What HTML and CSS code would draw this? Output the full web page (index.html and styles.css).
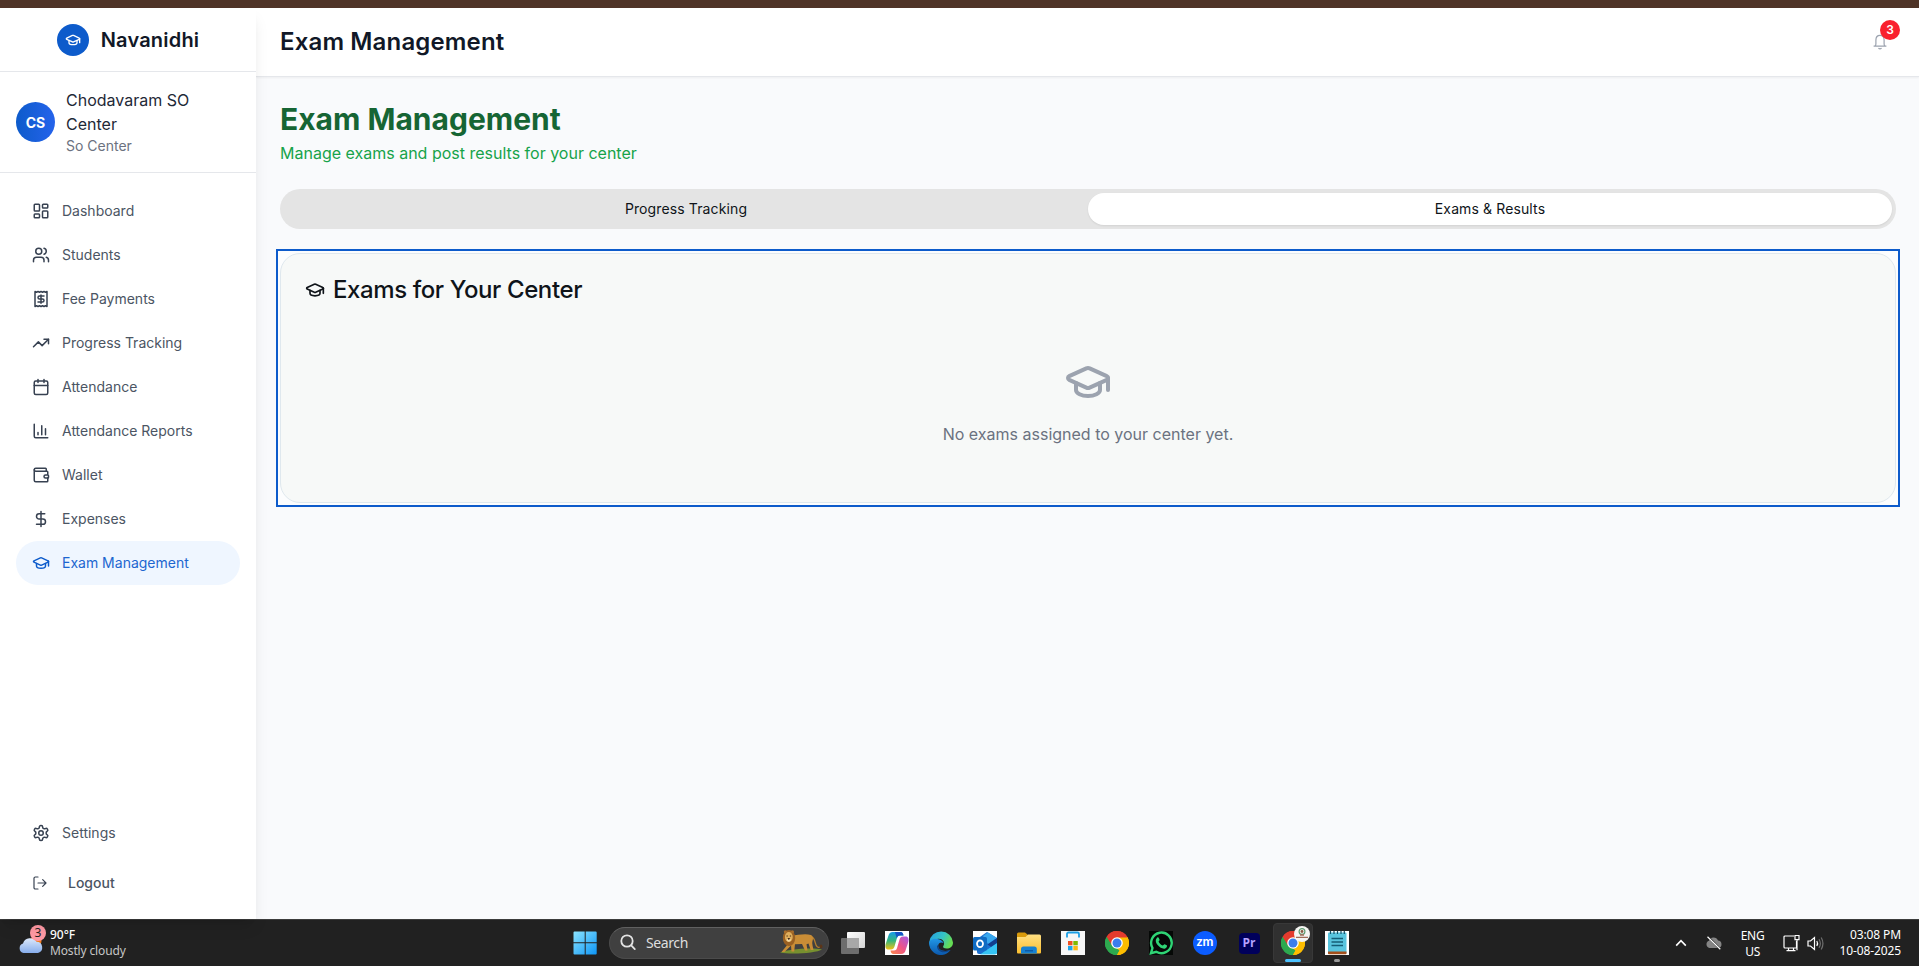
FILE: index.html
```html
<!DOCTYPE html>
<html lang="en">
<head>
<meta charset="utf-8">
<title>Exam Management - Navanidhi</title>
<link rel="stylesheet" href="styles.css">
</head>
<body>
<svg class="defs" aria-hidden="true">
  <symbol id="cap" viewBox="0 0 24 24"><path d="M21.42 10.922a1 1 0 0 0-.019-1.838L12.83 5.18a2 2 0 0 0-1.66 0L2.6 9.08a1 1 0 0 0 0 1.832l8.57 3.908a2 2 0 0 0 1.66 0z"/><path d="M22 10v6"/><path d="M6 12.5V16a6 3 0 0 0 12 0v-3.5"/></symbol>
  <symbol id="chrome" viewBox="0 0 24 24">
    <path fill="#e33b2e" d="M12 12 1.6 6A12 12 0 0 1 22.4 6z"/>
    <path fill="#2da94f" d="M12 12v12A12 12 0 0 1 1.6 6z"/>
    <path fill="#fdbd00" d="M12 12 22.4 6A12 12 0 0 1 12 24z"/>
    <path fill="#e33b2e" d="M12 6.4h10.6A12 12 0 0 0 1.6 6l5.5 9z"/>
    <path fill="#2da94f" d="M1.6 6 7.1 15l4.9 2.6 2.5 2L12 24A12 12 0 0 1 1.6 6z"/>
    <path fill="#fdbd00" d="M12 6.4h10.6A12 12 0 0 1 12 24l5-9z"/>
    <circle cx="12" cy="12" r="5.8" fill="#fff"/><circle cx="12" cy="12" r="4.5" fill="#3b7ded"/>
  </symbol>
</svg>
<div class="topstrip"></div>
<div class="app">
  <aside class="sidebar">
    <div class="brand"><span class="brand-mark"><svg class="ico i16"><use href="#cap"/></svg></span><span class="brand-name">Navanidhi</span></div>
    <div class="user">
      <span class="avatar">CS</span>
      <div class="user-text"><div class="user-name">Chodavaram SO Center</div><div class="user-role">So Center</div></div>
    </div>
    <nav class="nav">
      <a class="item"><svg class="ico i18" viewBox="0 0 24 24"><rect x="3" y="3" width="7" height="9" rx="1"/><rect x="14" y="3" width="7" height="5" rx="1"/><rect x="14" y="12" width="7" height="9" rx="1"/><rect x="3" y="16" width="7" height="5" rx="1"/></svg><span>Dashboard</span></a>
      <a class="item"><svg class="ico i18" viewBox="0 0 24 24"><path d="M16 21v-2a4 4 0 0 0-4-4H6a4 4 0 0 0-4 4v2"/><circle cx="9" cy="7" r="4"/><path d="M22 21v-2a4 4 0 0 0-3-3.87"/><path d="M16 3.13a4 4 0 0 1 0 7.75"/></svg><span>Students</span></a>
      <a class="item"><svg class="ico i18" viewBox="0 0 24 24"><path d="M4 2v20l2-1 2 1 2-1 2 1 2-1 2 1 2-1 2 1V2l-2 1-2-1-2 1-2-1-2 1-2-1-2 1Z"/><path d="M16 8h-6a2 2 0 1 0 0 4h4a2 2 0 1 1 0 4H8"/><path d="M12 17.5v-11"/></svg><span>Fee Payments</span></a>
      <a class="item"><svg class="ico i18" viewBox="0 0 24 24"><path d="m22 7-8.5 8.5-5-5L2 17"/><path d="M16 7h6v6"/></svg><span>Progress Tracking</span></a>
      <a class="item"><svg class="ico i18" viewBox="0 0 24 24"><path d="M8 2v4M16 2v4M3 10h18"/><rect x="3" y="4" width="18" height="18" rx="2"/></svg><span>Attendance</span></a>
      <a class="item"><svg class="ico i18" viewBox="0 0 24 24"><path d="M3 3v16a2 2 0 0 0 2 2h16M18 17V9M13 17V5M8 17v-3"/></svg><span>Attendance Reports</span></a>
      <a class="item"><svg class="ico i18" viewBox="0 0 24 24"><path d="M19 7V4a1 1 0 0 0-1-1H5a2 2 0 0 0 0 4h15a1 1 0 0 1 1 1v4h-3a2 2 0 0 0 0 4h3a1 1 0 0 0 1-1v-2a1 1 0 0 0-1-1"/><path d="M3 5v14a2 2 0 0 0 2 2h15a1 1 0 0 0 1-1v-4"/></svg><span>Wallet</span></a>
      <a class="item"><svg class="ico i18" viewBox="0 0 24 24"><path d="M12 2v20M17 5H9.5a3.5 3.5 0 0 0 0 7h5a3.5 3.5 0 0 1 0 7H6"/></svg><span>Expenses</span></a>
      <a class="item active"><svg class="ico i18"><use href="#cap"/></svg><span>Exam Management</span></a>
    </nav>
    <div class="nav-bottom">
      <a class="item"><svg class="ico i18" viewBox="0 0 24 24"><path d="M12.22 2h-.44a2 2 0 0 0-2 2v.18a2 2 0 0 1-1 1.73l-.43.25a2 2 0 0 1-2 0l-.15-.08a2 2 0 0 0-2.73.73l-.22.38a2 2 0 0 0 .73 2.73l.15.1a2 2 0 0 1 1 1.72v.51a2 2 0 0 1-1 1.74l-.15.09a2 2 0 0 0-.73 2.73l.22.38a2 2 0 0 0 2.73.73l.15-.08a2 2 0 0 1 2 0l.43.25a2 2 0 0 1 1 1.73V20a2 2 0 0 0 2 2h.44a2 2 0 0 0 2-2v-.18a2 2 0 0 1 1-1.73l.43-.25a2 2 0 0 1 2 0l.15.08a2 2 0 0 0 2.73-.73l.22-.39a2 2 0 0 0-.73-2.73l-.15-.08a2 2 0 0 1-1-1.74v-.5a2 2 0 0 1 1-1.74l.15-.09a2 2 0 0 0 .73-2.73l-.22-.38a2 2 0 0 0-2.73-.73l-.15.08a2 2 0 0 1-2 0l-.43-.25a2 2 0 0 1-1-1.73V4a2 2 0 0 0-2-2z"/><circle cx="12" cy="12" r="3"/></svg><span>Settings</span></a>
      <a class="item logout"><svg class="ico i16" viewBox="0 0 24 24"><path d="M9 21H5a2 2 0 0 1-2-2V5a2 2 0 0 1 2-2h4M16 17l5-5-5-5M21 12H9"/></svg><span>Logout</span></a>
    </div>
  </aside>
  <div class="content">
    <header class="header">
      <div class="header-title">Exam Management</div>
      <div class="bell"><svg width="14" height="16" viewBox="0 0 14 16"><path d="M1.9 12.1c.7-.5 1-1.2 1-2.2V6c0-2.800 1.700-4.700 4.100-4.700S11.100 3.200 11.100 6v3.900c0 1 .3 1.700 1 2.200M.6 12.200h12.800M5.400 14.300q1.600 1 3.200 0"/></svg><span class="badge">3</span></div>
    </header>
    <main class="main">
      <h1>Exam Management</h1>
      <p class="sub">Manage exams and post results for your center</p>
      <div class="tabs"><div class="tab">Progress Tracking</div><div class="tab on">Exams &amp; Results</div></div>
      <section class="panel"><div class="card">
        <h2><svg class="ico i20"><use href="#cap"/></svg><span>Exams for Your Center</span></h2>
        <div class="empty"><svg class="ico i48"><use href="#cap"/></svg><p>No exams assigned to your center yet.</p></div>
      </div></section>
    </main>
  </div>
</div>
<footer class="taskbar">
  <div class="weather">
    <svg width="28" height="30" viewBox="0 0 28 30"><defs><linearGradient id="cl" x1="0" y1="0" x2="0" y2="1"><stop offset="0" stop-color="#dce9fb"/><stop offset="1" stop-color="#86adeb"/></linearGradient></defs><circle cx="18" cy="16" r="5.500" fill="#f27a1a"/><path d="M5.500 28a5 5 0 0 1-.5-9.600 7.500 7.500 0 0 1 13.500-1.600A5.700 5.700 0 0 1 20 28z" fill="url(#cl)"/><circle cx="20" cy="8" r="8" fill="#ff99a4"/></svg>
    <span class="wbadge">3</span>
    <div class="wtext"><div class="deg">90°F</div><div class="cond">Mostly cloudy</div></div>
  </div>
  <div class="dock">
    <div class="slot"><svg width="24" height="24" viewBox="0 0 24 24"><defs><linearGradient id="wn" x1="0" y1="0" x2="1" y2="1"><stop offset="0" stop-color="#8be4ff"/><stop offset="1" stop-color="#0d95f5"/></linearGradient></defs><path fill="url(#wn)" d="M1.500.5h10.200v10.700H.5V1.500a1 1 0 0 1 1-1zM12.700.5h10a1 1 0 0 1 1 1v9.700h-11zM.5 12.300h11.200v11.200H1.500a1 1 0 0 1-1-1zM12.700 12.300h11v10.200a1 1 0 0 1-1 1h-10z"/></svg></div>
    <div class="search">
      <svg width="17" height="17" viewBox="0 0 17 17" fill="none" stroke="#e3e3e3" stroke-width="1.800" stroke-linecap="round"><circle cx="7" cy="7" r="5.700"/><path d="m11.200 11.300 3.600 3.800"/></svg><span>Search</span>
      <svg class="lion" width="44" height="26" viewBox="0 0 44 26"><path d="M1 23.500C8 20 34 18 43 20.500 38 24 12 26 1 23.500z" fill="#77902f"/><path d="M33 8c4 2 2.500 8.500 5.500 10 2 1 3.500-.5 3.300-1.500" fill="none" stroke="#b9802c" stroke-width="1.300"/><ellipse cx="42" cy="17.500" rx="1.500" ry="2" fill="#5b3518"/><path d="M13 7c5-1 13-2.500 19-1 2 .8 2.500 3.500 1.500 6-.6 1.800 0 4 1 9h-2.800L29.500 14.500l-2 .7 1 6.300h-2.500L23 15l-7 .3-.8 7.200h-2.700l-.5-6-6.500 6.500H2.500L9 15z" fill="#c98d36"/><ellipse cx="10" cy="9" rx="6.200" ry="8" fill="#9a6022"/><circle cx="6.300" cy="2.800" r="1.500" fill="#a96d2a"/><circle cx="13.500" cy="2.800" r="1.500" fill="#a96d2a"/><ellipse cx="9.800" cy="8" rx="3.900" ry="5" fill="#dfae5c"/><ellipse cx="9.800" cy="11" rx="2.100" ry="1.800" fill="#f3d9a5"/><path d="M7.500 7h1.300M10.800 7h1.300M9 9.500h1.600l-.8 1z" stroke="#3c210e" stroke-width=".9"/></svg>
    </div>
    <div class="slot"><svg width="24" height="24" viewBox="0 0 24 24"><defs><linearGradient id="tv" x1="0" y1="0" x2="1" y2="1"><stop offset="0" stop-color="#fff"/><stop offset="1" stop-color="#d5d5d5"/></linearGradient></defs><rect x="6" y="1" width="18" height="16" rx="1" fill="url(#tv)"/><rect x="0" y="7" width="18" height="16" rx="1" fill="#6d6d6d"/><path d="M6 7h12v10H6z" fill="#a8a8a8"/></svg></div>
    <div class="slot"><svg width="24" height="24" viewBox="0 0 24 24"><defs><linearGradient id="c1" x1="0" y1="0" x2="0" y2="1"><stop offset="0" stop-color="#159be9"/><stop offset=".5" stop-color="#35b67b"/><stop offset="1" stop-color="#f2c215"/></linearGradient><linearGradient id="c2" x1="1" y1="0" x2="0" y2="1"><stop offset="0" stop-color="#a55ce8"/><stop offset=".5" stop-color="#ee5488"/><stop offset="1" stop-color="#fb8a4a"/></linearGradient></defs><path fill="#fff" d="M0 0h24v24H0z"/><path d="M8 1h7.500c2 0 2.500 1.500 3 3.500H15c-2 0-2.600 1-3.200 3l-2.300 8c-.7 2-1.500 3-3.500 3H3.500C.5 18.500 0 16 .7 13L3.300 5C4 2.500 5.300 1 8 1z" fill="url(#c1)"/><path d="M10 1h5.500c2 0 2.500 1.500 3 3.500H15c-2 0-2.600 1-3.200 3z" fill="#1454c6"/><path d="M16 23H8.500c-2 0-2.500-1.500-3-3.500H9c2 0 2.600-1 3.200-3l2.300-8c.7-2 1.500-3 3.500-3h2.500c3 0 3.500 2.500 2.800 5.500L20.700 19C20 21.500 18.700 23 16 23z" fill="url(#c2)"/></svg></div>
    <div class="slot"><svg width="24" height="24" viewBox="0 0 24 24"><defs><linearGradient id="e1" x1="0" y1="0" x2="1" y2=".4"><stop offset="0" stop-color="#239de4"/><stop offset=".6" stop-color="#35c3c5"/><stop offset="1" stop-color="#66dc55"/></linearGradient><linearGradient id="e2" x1="0" y1="0" x2="0" y2="1"><stop offset="0" stop-color="#2096e6"/><stop offset="1" stop-color="#0b58ac"/></linearGradient></defs><path d="M.3 11A11.900 11.900 0 0 1 24 11.500c0 4-3 6-6.300 6-3 0-4.200-1.200-3.400-2.500 2.500-4-1-7.500-4.800-7.300C5 8 1 11 .3 15z" fill="url(#e1)"/><path d="M.1 12C.5 9 4.500 7.300 8.500 8c3 .4 5.500 2 6.200 4.200C12 10.500 9.500 12 9.200 14.500 9 18.500 13.500 21.500 21.500 19 17 25.500 9 25 5 21.700 1.500 19 .1 15.500.1 12z" fill="url(#e2)"/><path d="M8 14.500c-.5 4.500 4.300 8.800 12 5.800l1.500-1.300c-8 2.500-12.500-.5-12.300-4.500z" fill="#0e4389"/></svg></div>
    <div class="slot"><svg width="24" height="24" viewBox="0 0 24 24"><path fill="#fff" d="M0 0h24v24H0z"/><path d="M4 8 14 1l10 6v14a2 2 0 0 1-2 2H6a2 2 0 0 1-2-2z" fill="#1a6fd1"/><path d="m10 5 5-3.500L24 7l-9 6z" fill="#38a8ef"/><path d="m24 7-9.500 6.500L24 20z" fill="#123f8e"/><path d="M24 12v9a2.500 2.500 0 0 1-2.500 2.500H7z" fill="#35c4f4"/><rect y="6" width="14" height="13.500" rx="1.500" fill="#0f6cc4"/><ellipse cx="7" cy="12.700" rx="3" ry="3.400" fill="none" stroke="#fff" stroke-width="1.800"/></svg></div>
    <div class="slot"><svg width="24" height="24" viewBox="0 0 24 24"><defs><linearGradient id="fo" x1="0" y1="0" x2="0" y2="1"><stop offset="0" stop-color="#ffe083"/><stop offset="1" stop-color="#fbbe2f"/></linearGradient></defs><path d="M0 3a1.500 1.500 0 0 1 1.500-1.500H8l2.500 2V8H0z" fill="#d99a0b"/><path d="M0 6h8.500L11 3.500h11.500A1.500 1.500 0 0 1 24 5v16.500a1 1 0 0 1-1 1H1a1 1 0 0 1-1-1z" fill="url(#fo)"/><path d="M4 22.500V18a2.500 2.500 0 0 1 2.500-2.500h10.800a2.500 2.500 0 0 1 2.500 2.500v4.500z" fill="#1681d2"/><path d="M8 19h8v1.500H8z" fill="#0d5aa5"/></svg></div>
    <div class="slot"><svg width="24" height="24" viewBox="0 0 24 24"><path fill="#f7f7f7" d="M0 0h24v24H0z"/><path d="M6 6.500V3a1.500 1.500 0 0 1 1.500-1.500h9A1.500 1.500 0 0 1 18 3v3.500" fill="none" stroke="#1d9fe5" stroke-width="1.800"/><path fill="#ef5123" d="M7 10h4.500v4.300H7z"/><path fill="#7fba00" d="M12.300 10h4.500v4.300h-4.500z"/><path fill="#1ba5ea" d="M7 15h4.500v4.300H7z"/><path fill="#fcb813" d="M12.300 15h4.500v4.300h-4.500z"/></svg></div>
    <div class="slot"><svg width="24" height="24"><use href="#chrome"/></svg></div>
    <div class="slot"><svg width="24" height="24" viewBox="0 0 24 24"><path d="M0 0h24v24H0z" fill="#050806"/><path d="M2 22.200 3.500 17A10.300 10.300 0 1 1 7.300 20.800z" fill="none" stroke="#2fd475" stroke-width="2.400"/><path d="M8.800 6.200c.5 0 .8.200 1 .7l.8 1.900c.2.600-.9 1.500-1 1.900.9 1.900 2.300 3.100 4.100 3.900.5-.2 1.300-1.600 1.900-1.400l2.100 1c.8.400.2 2.700-1.500 3.300-4.500 1.300-10.500-5.100-9.300-8.900.3-1 1.100-2.200 1.900-2.400z" fill="#2fd475"/></svg></div>
    <div class="slot"><span class="zm">zm</span></div>
    <div class="slot"><span class="pr">Pr</span></div>
    <div class="slot"><div class="running"><svg width="24" height="24"><use href="#chrome"/></svg><svg class="profile" width="16" height="16" viewBox="0 0 16 16"><circle cx="8" cy="8" r="8" fill="#f5f5f2"/><circle cx="8" cy="5.500" r="2.900" fill="none" stroke="#5e9c72" stroke-width="1.200"/><circle cx="8" cy="5.500" r="1.400" fill="#8a5b43"/><path d="M6 9h4M2 11.300h12" stroke="#a06c58" stroke-width="1.300"/></svg><span class="bar"></span></div></div>
    <div class="slot note"><svg width="24" height="24" viewBox="0 0 24 24"><path fill="#fff" d="M0 0h24v24H0z"/><rect x="3" y="1.500" width="18.500" height="21" rx="1" fill="#58c4de"/><path d="M3 20.500h18.500V22a1 1 0 0 1-1 1.200H4A1 1 0 0 1 3 22z" fill="#a34f1b"/><path d="M5.500 0v3M9 0v3M12.500 0v3M16 0v3M19.300 0v3" stroke="#154e66" stroke-width="1.200"/><path d="M6.500 7.500h11.500M6.500 11h11.500M6.500 14.500h11.500" stroke="#145d77" stroke-width="1.500"/></svg><span class="dot"></span></div>
  </div>
  <div class="tray">
    <svg class="chev" width="12" height="8" viewBox="0 0 12 8"><path d="m1.200 6.600 4.800-5 4.800 5" fill="none" stroke="#fff" stroke-width="1.600"/></svg>
    <svg class="cloud" width="18" height="14" viewBox="0 0 18 14"><path d="M4.500 12A3.800 3.800 0 0 1 4 4.700a4.800 4.800 0 0 1 9-.2A3.800 3.800 0 0 1 13.500 12z" fill="#858585"/><path d="m3 .8 12.300 12.500" stroke="#222" stroke-width="2"/><path d="m2.500.8 12.800 12.400" stroke="#fff" stroke-width="1.200"/></svg>
    <div class="lang"><div>ENG</div><div>US</div></div>
    <svg class="net" width="17" height="18" viewBox="0 0 17 18" fill="none" stroke="#fff" stroke-width="1.200"><path d="M11 2H2a1 1 0 0 0-1 1v10a1 1 0 0 0 1 1h11.500V7M5.500 14v2.500M10.500 14v2.500M3.500 16.700h9M12 1.500h4v4.200h-4zM14 5.700v10.500"/></svg>
    <svg class="vol" width="17" height="15" viewBox="0 0 17 15" fill="none" stroke-width="1.200"><path d="M1 5h2.500L7.500 1.500v12L3.500 10H1z" stroke="#fff"/><path d="M9.800 5q1.600 2.500 0 5" stroke="#fff"/><path d="M12 3.300q2.700 4.200 0 8.400M14.200 1.500q3.500 6 0 12" stroke="#6f6f6f"/></svg>
    <div class="clock"><div>03:08 PM</div><div>10-08-2025</div></div>
  </div>
</footer>
</body>
</html>
```
FILE: styles.css
```css
* { box-sizing: border-box; }
body { margin: 0; height: 966px; display: flex; flex-direction: column; overflow: hidden; background: #f9fafc; font-family: Inter, "Liberation Sans", sans-serif; }
h1, h2, p { margin: 0; }
svg { flex: none; display: block; }
.defs { display: none; }
.ico { fill: none; stroke: currentColor; stroke-width: 2; stroke-linecap: round; stroke-linejoin: round; }
.i16 { width: 16px; height: 16px; }
.i18 { width: 18px; height: 18px; }
.i20 { width: 20px; height: 20px; }
.i48 { width: 48px; height: 48px; }

.topstrip { height: 8px; background: #4f3427; flex: none; }
.app { display: flex; height: 911px; flex: none; }

.sidebar { position: relative; z-index: 2; width: 256px; flex: none; display: flex; flex-direction: column; background: #fff; box-shadow: 0 10px 15px -3px rgba(0,0,0,.1), 0 4px 6px -4px rgba(0,0,0,.1); }
.brand { height: 64px; flex: none; display: flex; align-items: center; justify-content: center; gap: 12px; border-bottom: 1px solid #e5e7eb; }
.brand-mark { width: 32px; height: 32px; border-radius: 50%; background: #0d5bcb; color: #fff; display: flex; align-items: center; justify-content: center; }
.brand-name { font-size: 20px; font-weight: 600; line-height: 28px; letter-spacing: .2px; color: #111827; }
.user { height: 101px; flex: none; display: flex; align-items: center; gap: 12px; padding: 0 16px; border-bottom: 1px solid #e5e7eb; }
.avatar { width: 39px; height: 40px; flex: none; border-radius: 50%; background: linear-gradient(90deg, #0d5bcb, #2563eb); color: #fff; font-size: 14px; font-weight: 700; display: flex; align-items: center; justify-content: center; }
.user-text { margin-left: -1px; }
.user-name { font-size: 16px; line-height: 24px; color: #1f2937; width: 145px; }
.user-role { font-size: 14px; line-height: 20px; color: #6b7280; }
.nav { padding: 16px 16px 0; flex: 1; }
.item { display: flex; align-items: center; gap: 12px; height: 44px; padding: 0 16px; border-radius: 22px; font-size: 14px; color: #4b5563; }
.item span { padding-bottom: 2px; }
.item .ico { color: #374151; }
.item.active { background: #eff6ff; color: #1d66d0; }
.item.active .ico { color: #0d5bcb; }
.nav-bottom { padding: 0 16px 14px; display: flex; flex-direction: column; gap: 6px; }
.logout { gap: 20px; font-weight: 500; }
.logout .ico { stroke-width: 1.8; }

.content { flex: 1; min-width: 0; display: flex; flex-direction: column; }
.header { height: 69px; flex: none; display: flex; justify-content: space-between; background: #fff; border-bottom: 1px solid #e5e7eb; box-shadow: 0 1px 2px rgba(0,0,0,.05); padding: 0 32px 0 24px; }
.header-title { font-size: 24px; font-weight: 600; line-height: 32px; letter-spacing: .15px; padding-top: 18px; color: #111827; }
.bell { position: relative; margin-top: 26px; width: 14px; height: 16px; }
.bell path { fill: none; stroke: #9ca3af; stroke-width: 1.2; }
.badge { position: absolute; left: 7px; top: -14px; width: 20px; height: 20px; border-radius: 50%; background: #f9202e; color: #fff; font-size: 12px; font-weight: 600; line-height: 20px; text-align: center; }
.main { padding: 24px 23px 0 24px; }
h1 { font-size: 30px; font-weight: 700; line-height: 36px; color: #166534; }
.sub { font-size: 16px; line-height: 24px; margin-top: 4px; color: #16a34a; }
.tabs { margin-top: 24px; height: 40px; padding: 4px; display: grid; grid-template-columns: 1fr 1fr; border-radius: 20px; background: #e4e4e4; }
.tab { display: flex; align-items: center; justify-content: center; padding-bottom: 2px; border-radius: 16px; font-size: 14px; letter-spacing: .12px; color: #0f1419; }
.tab.on { background: #fff; box-shadow: 0 1px 2px rgba(0,0,0,.08); }
.panel { margin: 20px -4px 0; padding: 2px; border: 2px solid #0d5bcb; background: #fcfdfe; }
.card { height: 250px; border: 1px solid #dfe8ee; border-radius: 20px; background: #f7f9f8; padding: 24px; }
h2 { display: flex; align-items: center; gap: 8px; font-size: 24px; line-height: 24px; font-weight: 500; color: #0f1419; letter-spacing: -.4px; }
.empty { padding-top: 56px; display: flex; flex-direction: column; align-items: center; color: #9ca3af; }
.empty p { margin-top: 16px; font-size: 16px; line-height: 24px; color: #6b7280; }

.taskbar { height: 47px; flex: none; display: grid; grid-template-columns: 562px 791px 1fr; background: #212121; border-top: 1px solid #3c3c3c; color: #fff; font-family: "Noto Sans", "Open Sans", sans-serif; }
.weather { position: relative; display: flex; padding: 5px 0 0 18px; gap: 4px; font-size: 12px; line-height: 16px; }
.wbadge { position: absolute; left: 30px; top: 5px; width: 16px; text-align: center; color: #222; line-height: 16px; }
.wtext { padding-top: 2px; }
.deg { font-weight: 500; }
.cond { color: #c6c6c6; letter-spacing: -.15px; }
.dock { display: flex; align-items: center; }
.slot { width: 44px; height: 46px; flex: none; display: flex; align-items: center; justify-content: center; position: relative; }
.slot:first-child { padding-left: 1px; }
.search { width: 220px; height: 32px; margin: 0 2px 0 3px; flex: none; display: flex; align-items: center; border: 1px solid #4b4b4b; border-top-color: #606060; border-radius: 16px; background: #404040; padding: 0 5px 2px 10px; gap: 9px; font-size: 14px; letter-spacing: -.4px; color: #dedede; }
.lion { margin-left: auto; }
.zm { width: 24px; height: 24px; border-radius: 50%; background: #0b5cff; font: 700 13px/21px Lato, sans-serif; text-align: center; }
.pr { width: 21px; height: 21px; border-radius: 4px; background: #00005b; color: #b4a2ff; font: 700 12px/20px "Open Sans", sans-serif; text-align: center; }
.running { position: relative; width: 40px; height: 40px; border-radius: 4px; background: #303030; border: 1px solid #383838; display: flex; align-items: center; justify-content: center; }
.profile { position: absolute; left: 20px; top: 2px; }
.bar { position: absolute; bottom: 0; left: 11px; width: 16px; height: 3px; border-radius: 2px; background: #4cc2ff; }
.dot { position: absolute; left: 19px; bottom: 4px; width: 6px; height: 3px; border-radius: 2px; background: #9a9a9a; }
.tray { display: flex; align-items: center; justify-content: flex-end; padding-right: 18px; font-size: 12px; line-height: 16px; }
.chev { margin-right: 18px; }
.cloud { margin-right: 18px; }
.lang { text-align: center; width: 24px; margin-right: 18px; padding-top: 1px; display: flex; flex-direction: column; align-items: center; letter-spacing: -.3px; }
.net { margin-right: 7px; }
.vol { margin-right: 16px; }
.clock { text-align: right; letter-spacing: -.12px; }
```
